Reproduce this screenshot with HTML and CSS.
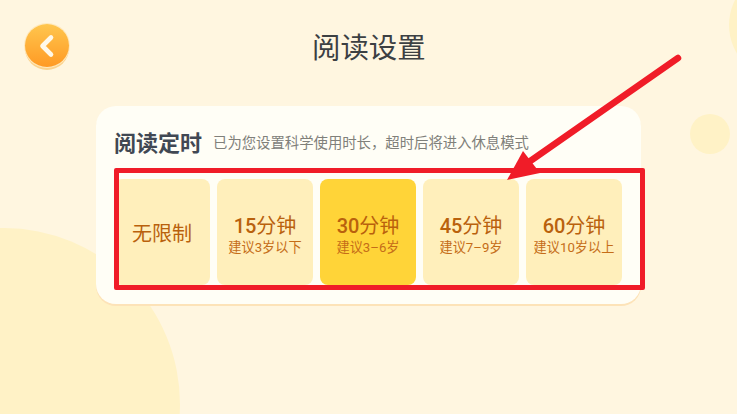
FILE: index.html
```html
<!DOCTYPE html>
<html lang="zh-CN">
<head>
<meta charset="utf-8">
<title>阅读设置</title>
<link rel="stylesheet" href="styles.css">
</head>
<body>
<div class="page">
  <div class="blob blob-big"></div>
  <div class="blob blob-right"></div>
  <div class="blob blob-corner"></div>

  <header class="header">
    <button class="back" aria-label="返回">
      <svg viewBox="0 0 44 44" width="44" height="44"><path d="M26 13.5 L17.5 22 L26 30.5" fill="none" stroke="#fff8e8" stroke-width="4.6" stroke-linecap="round" stroke-linejoin="round"/></svg>
    </button>
    <h1 class="title">阅读设置</h1>
  </header>

  <section class="card">
    <div class="card-head">
      <h2 class="card-title">阅读定时</h2>
      <p class="card-note">已为您设置科学使用时长，超时后将进入休息模式</p>
    </div>
    <div class="tiles">
      <div class="tile"><span class="tile-plain">无限制</span></div>
      <div class="tile"><span class="tile-main"><b class="num">15</b>分钟</span><span class="tile-sub">建议3岁以下</span></div>
      <div class="tile tile-active"><span class="tile-main"><b class="num">30</b>分钟</span><span class="tile-sub">建议3–6岁</span></div>
      <div class="tile"><span class="tile-main"><b class="num">45</b>分钟</span><span class="tile-sub">建议7–9岁</span></div>
      <div class="tile"><span class="tile-main"><b class="num">60</b>分钟</span><span class="tile-sub">建议10岁以上</span></div>
    </div>
  </section>

  <div class="mark-box"></div>
  <svg class="mark-arrow" viewBox="0 0 737 414" width="737" height="414">
    <path d="M678 58 L526 164" fill="none" stroke="#f01c28" stroke-width="6.5" stroke-linecap="round"/>
    <polygon points="507,180 523,151 540,173" fill="#f01c28"/>
  </svg>
</div>
</body>
</html>
```
FILE: styles.css
```css
* { box-sizing: border-box; }
html, body { margin: 0; padding: 0; }
body {
  width: 737px;
  height: 414px;
  overflow: hidden;
  font-family: Roboto, "Noto Sans CJK SC", sans-serif;
}
.page {
  position: relative;
  width: 737px;
  height: 414px;
  overflow: hidden;
  background: #fff6e0;
  padding: 24px 0 0 96px;
}
.blob { position: absolute; border-radius: 50%; background: #fff2c6; }
.blob-big { left: -172px; top: 228px; width: 352px; height: 352px; }
.blob-right { left: 690px; top: 114px; width: 40px; height: 40px; }
.blob-corner { left: 729px; top: -30px; width: 110px; height: 110px; }

.header {
  position: relative;
  display: flex;
  align-items: flex-start;
  height: 82px;
  margin-left: -71px;
}
.back {
  width: 44px;
  height: 43px;
  flex: none;
  padding: 0;
  border: 0;
  border-radius: 50%;
  background: linear-gradient(#ffc64e, #ff9a24);
  box-shadow: 0 0 0 1px #ffe9bd, 0 3px 0 0 #fbd38d;
  display: flex;
}
.title {
  margin: 6px 0 0 243px;
  font-size: 28.4px;
  line-height: 38px;
  font-weight: 400;
  color: #3c4043;
}

.card {
  position: relative;
  width: 545px;
  height: 198px;
  padding: 22px 19px 0 18px;
  border-radius: 20px;
  background: #fffef6;
  box-shadow: 0 2px 0 #fde3b8;
}
.card-head { display: flex; align-items: center; height: 32px; }
.card-title {
  margin: 0;
  font-size: 22px;
  line-height: 32px;
  font-weight: 700;
  color: #414853;
}
.card-note {
  margin: 0 0 0 11px;
  font-size: 14.36px;
  line-height: 32px;
  color: #80807a;
}
.tiles { display: flex; gap: 7px; margin-top: 19px; }
.tile {
  width: 96px;
  height: 106px;
  border-radius: 8px;
  background: #ffefbb;
  color: #b9610d;
  display: flex;
  flex-direction: column;
  align-items: center;
  justify-content: center;
}
.tile-active { background: #ffd438; }
.tile-plain { font-size: 20px; line-height: 28px; margin-top: 4px; }
.tile-main { font-size: 20px; line-height: 26px; font-weight: 400; margin-top: 6px; }
.num { font-weight: 500; }
.tile-sub { font-size: 13.2px; line-height: 18px; color: #c56d18; }

.mark-box {
  position: absolute;
  left: 114px;
  top: 168px;
  width: 531px;
  height: 122px;
  border: 5px solid #f01c28;
  border-radius: 2px;
}
.mark-arrow { position: absolute; left: 0; top: 0; }
```
